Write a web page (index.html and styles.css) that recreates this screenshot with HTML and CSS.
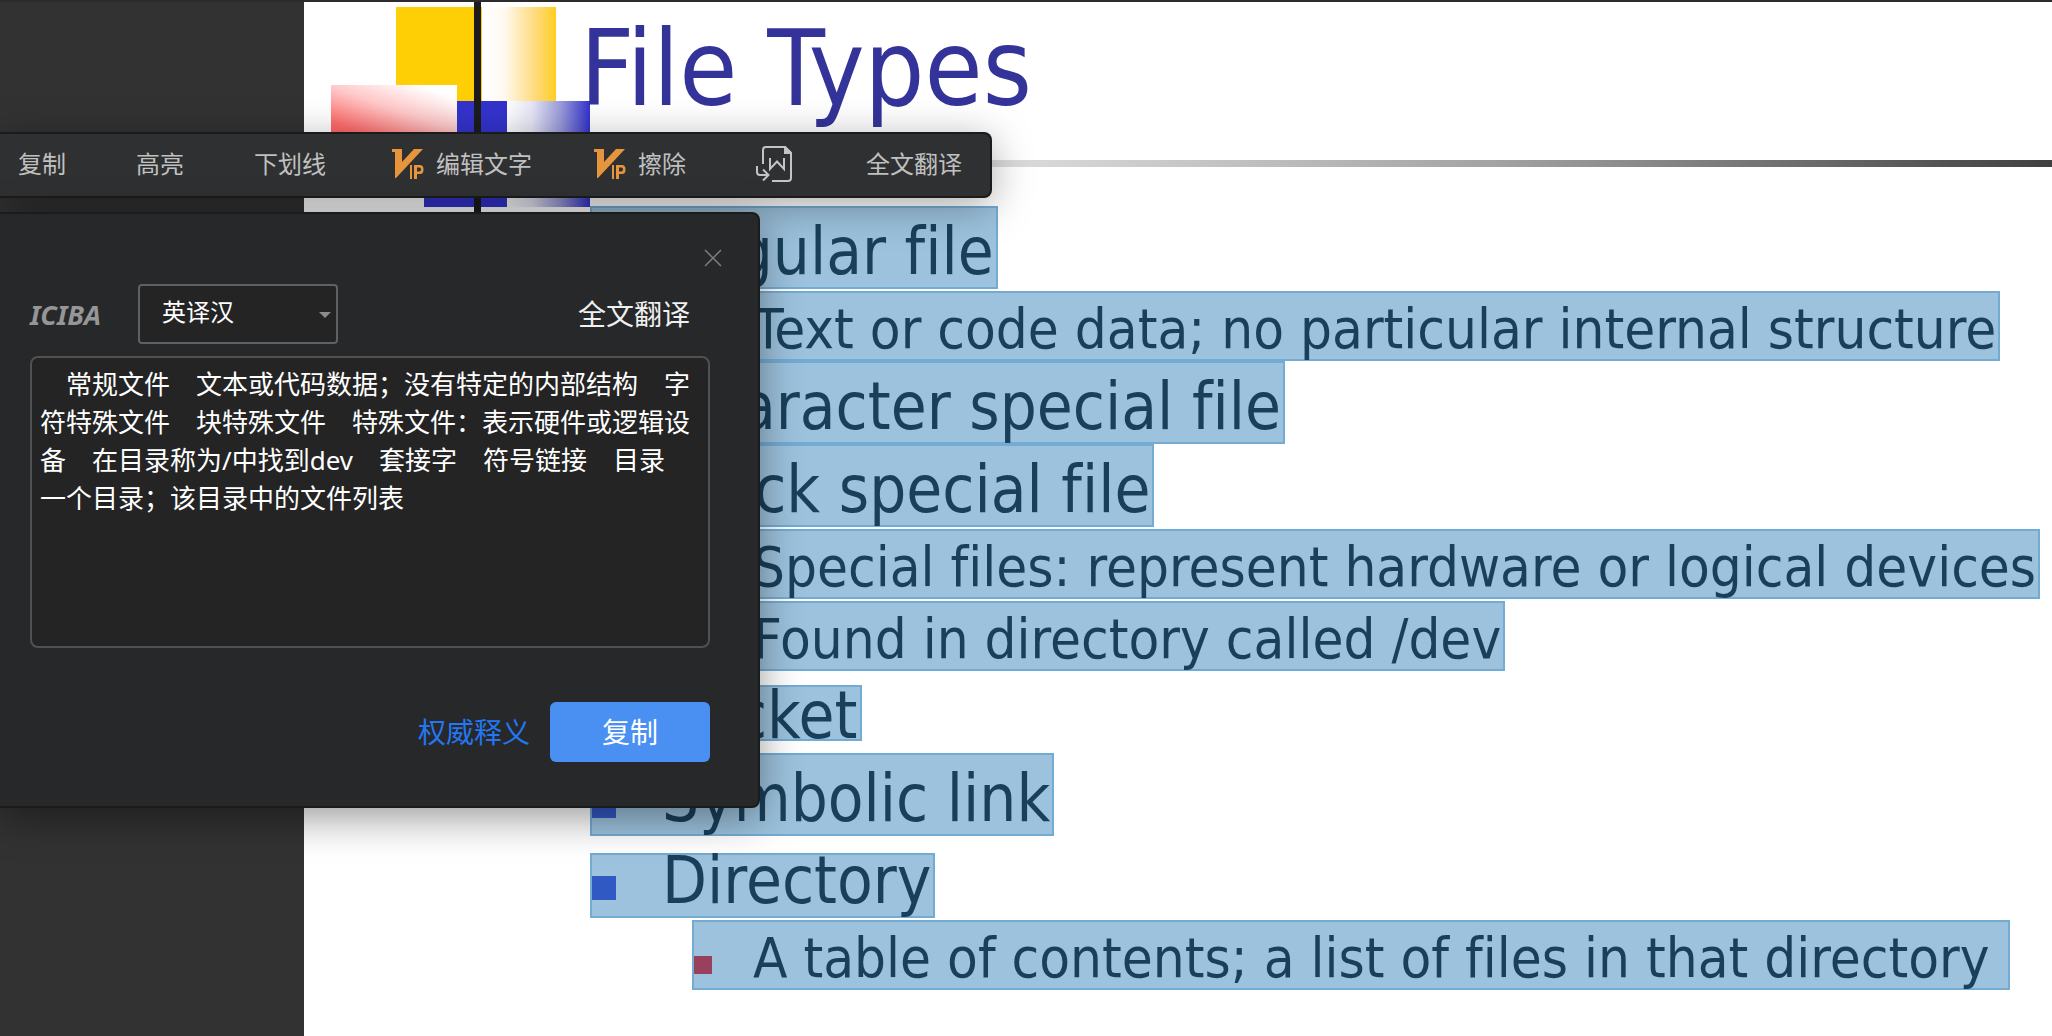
FILE: index.html
```html
<!DOCTYPE html>
<html lang="zh-CN">
<head>
<meta charset="utf-8">
<title>File Types</title>
<link rel="stylesheet" href="styles.css">
</head>
<body>
<svg class="symbols" aria-hidden="true">
  <symbol id="vip" viewBox="0 0 32 32">
    <path fill="#e6953c" fill-rule="evenodd" d="M0 1H10V14L22 1H31L4 30H3V4H0ZM18 17H20V31H18ZM22 17H28Q31.500 17 31.500 21.500T28 26H25V31H22ZM25 19.500V23.500H27.500Q29 23.500 29 21.500T27.500 19.500Z"/>
  </symbol>
</svg>

<main class="slide">
  <svg class="motif" viewBox="0 0 286 211" aria-hidden="true">
    <defs>
      <linearGradient id="gold"><stop offset="0.050" stop-color="#fff"/><stop offset="0.300" stop-color="#fffaf0"/><stop offset="0.750" stop-color="#ffd974"/><stop offset="1" stop-color="#ffce1f"/></linearGradient>
      <linearGradient id="indigo"><stop offset="0" stop-color="#fff"/><stop offset="0.300" stop-color="#e6e6f6"/><stop offset="0.650" stop-color="#9a9adb"/><stop offset="1" stop-color="#3333cc"/></linearGradient>
      <linearGradient id="rose" x1="0" y1="1" x2="0.700" y2="0"><stop offset="0" stop-color="#ff4c4c"/><stop offset="0.300" stop-color="#ff7070"/><stop offset="0.650" stop-color="#ffc8c8"/><stop offset="1" stop-color="#fff"/></linearGradient>
    </defs>
    <rect x="92" y="5" width="86" height="120" fill="#ffcf05"/>
    <rect x="178" y="5" width="74" height="94" fill="url(#gold)"/>
    <rect x="120" y="99" width="83" height="106" fill="#3333cc"/>
    <rect x="203" y="99" width="83" height="106" fill="url(#indigo)"/>
    <rect x="27" y="83" width="126" height="64" fill="url(#rose)"/>
    <rect x="170" y="0" width="7" height="211" fill="#1c1c1c"/>
  </svg>

  <h1 class="slide-title">File Types</h1>
  <hr class="slide-rule">

  <ul class="outline">
    <li class="row">Regular file</li>
    <li class="row sub">Text or code data; no particular internal structure</li>
    <li class="row">Character special file</li>
    <li class="row">Block special file</li>
    <li class="row sub">Special files: represent hardware or logical devices</li>
    <li class="row sub">Found in directory called /dev</li>
    <li class="row short">Socket</li>
    <li class="row late">Symbolic link</li>
    <li class="row mid">Directory</li>
    <li class="row sub">A table of contents; a list of files in that directory&nbsp;</li>
  </ul>
</main>

<div class="toolbar" role="toolbar">
  <button class="tool">复制</button>
  <button class="tool">高亮</button>
  <button class="tool">下划线</button>
  <button class="tool vip"><svg width="32" height="32" aria-hidden="true"><use href="#vip"/></svg>编辑文字</button>
  <button class="tool vip"><svg width="32" height="32" aria-hidden="true"><use href="#vip"/></svg>擦除</button>
  <button class="tool export" aria-label="Word">
    <svg width="36" height="36" viewBox="0 0 36 36" fill="none" stroke="#c4c4c4" stroke-width="2" aria-hidden="true">
      <path d="M7 18V4Q7 1 10 1H29L35 7V32Q35 35 32 35H16"/>
      <path d="M29 1V7H35Z" fill="#c4c4c4"/>
      <path d="M14 12V23L21 15.500L28 23V12"/>
      <path d="M1 20V26Q1 29 4 29H12M7 23.500L12.500 29L7 34.500"/>
    </svg>
  </button>
  <button class="tool">全文翻译</button>
</div>

<section class="panel">
  <button class="close" aria-label="关闭">
    <svg width="18" height="18" viewBox="0 0 18 18" stroke="#7c7c7c" stroke-width="1.500" aria-hidden="true"><path d="M1 1L17 17M17 1L1 17"/></svg>
  </button>
  <div class="controls">
    <strong class="brand">ICIBA</strong>
    <div class="picker">
      <select class="direction" aria-label="翻译方向"><option>英译汉</option></select>
      <svg class="caret" width="12" height="6" viewBox="0 0 12 6" aria-hidden="true"><path fill="#8c8c8c" d="M0 0H12L6 6Z"/></svg>
    </div>
    <button class="full">全文翻译</button>
  </div>
  <textarea class="result" aria-label="译文" readonly>　常规文件　文本或代码数据；没有特定的内部结构　字
符特殊文件　块特殊文件　特殊文件：表示硬件或逻辑设
备　在目录称为/中找到dev　套接字　符号链接　目录
一个目录；该目录中的文件列表</textarea>
  <div class="actions">
    <a class="lookup" href="#">权威释义</a>
    <button class="copy">复制</button>
  </div>
</section>
</body>
</html>
```

FILE: styles.css
```css
* { box-sizing: border-box; }

body {
  position: relative;
  display: flex;
  min-height: 100vh;
  margin: 0;
  overflow: hidden;
  padding-left: 304px;
  border-top: 2px solid #2d2b2c;
  background: #323232;
  font-family: "Noto Sans", "Noto Sans CJK SC", sans-serif;
}

button, select, textarea {
  margin: 0;
  padding: 0;
  border: 0;
  background: none;
  color: inherit;
  font: inherit;
}

svg { display: block; }
.symbols { position: absolute; width: 0; height: 0; }

/* Slide */
.slide {
  position: relative;
  flex: 1;
  min-width: 0;
  background: #fff;
  font-family: "DejaVu Sans Condensed", "DejaVu Sans", sans-serif;
  font-stretch: condensed;
  font-variant-ligatures: none;
  white-space: nowrap;
}

.motif {
  position: absolute;
  top: 0;
  left: 0;
  width: 286px;
  height: 211px;
}

.slide-title {
  position: relative;
  margin: 0;
  padding: 7px 0 0 276px;
  color: #333399;
  font-size: 105px;
  font-weight: 400;
  line-height: 120px;
}

.slide-rule {
  height: 7px;
  margin: 31px 0 39px;
  border: 0;
  background: linear-gradient(90deg, #fff, #dcdcdc 40%, #a3a3a3 68%, #404040);
}

.outline {
  display: flex;
  flex-direction: column;
  align-items: flex-start;
  margin: 0;
  padding: 0 0 0 286px;
  list-style: none;
}

.row {
  position: relative;
  height: 83px;
  padding: 0 2px 0 70px;
  border: 2px solid #74abd2;
  background: #9cc2dd;
  color: #193f5a;
  font-size: 65px;
  line-height: 88px;
}

.row::before {
  content: "";
  position: absolute;
  top: 39px;
  left: 0;
  width: 24px;
  height: 24px;
  background: #3159c4;
}

.sub {
  height: 70px;
  margin: 2px 0 0 102px;
  padding-left: 59px;
  font-size: 56px;
  line-height: 72px;
}

.sub::before {
  top: 34px;
  width: 18px;
  height: 18px;
  background: #99405c;
}

.short { height: 56px; margin-top: 14px; line-height: 57px; }
.late { margin-top: 12px; }
.mid { height: 65px; margin-top: 17px; line-height: 51px; }
.mid::before { top: 21px; }

/* Selection toolbar */
.toolbar {
  position: absolute;
  top: 130px;
  left: 0;
  display: flex;
  align-items: center;
  gap: 62px;
  height: 66px;
  padding: 0 24px 2px 14px;
  border: 2px solid #1b1b1c;
  border-left: 0;
  border-radius: 0 8px 8px 0;
  background: #2f3031;
  box-shadow: 0 8px 40px rgba(0, 0, 0, 0.340);
  color: #c0c0c0;
  font-size: 24px;
  line-height: 32px;
  white-space: nowrap;
}

.tool { padding: 0 4px; }
.vip { display: flex; align-items: center; gap: 12px; padding: 0; }
.export { padding: 0 8px; }

/* Translation panel */
.panel {
  position: absolute;
  top: 210px;
  left: 0;
  width: 760px;
  padding: 35px 48px 44px 30px;
  border: 2px solid #1b1b1c;
  border-left: 0;
  border-radius: 0 8px 8px 0;
  background: #27282a;
  box-shadow: 0 10px 40px rgba(0, 0, 0, 0.400);
  color: #fff;
}

.close { display: block; margin: 0 -12px 0 auto; }

.controls {
  display: flex;
  align-items: center;
  margin: 17px 0 12px;
}

.brand {
  width: 108px;
  color: #969696;
  font-size: 27px;
  font-style: italic;
}

.picker { position: relative; width: 200px; }

.direction {
  display: block;
  width: 100%;
  height: 60px;
  padding: 0 22px 6px;
  border: 2px solid #606060;
  border-radius: 4px;
  appearance: none;
  background: #242424;
  font-size: 24px;
}

.caret { position: absolute; top: 28px; right: 7px; }

.full {
  margin: 0 20px 0 auto;
  padding-bottom: 2px;
  color: #f0f0f0;
  font-size: 28px;
}

.result {
  display: block;
  width: 100%;
  height: 292px;
  padding: 7px 8px;
  border: 2px solid #515151;
  border-radius: 8px;
  background: #242424;
  font-size: 26px;
  line-height: 38px;
  overflow: hidden;
  resize: none;
  white-space: pre;
}

.actions {
  display: flex;
  align-items: center;
  justify-content: flex-end;
  gap: 20px;
  margin-top: 54px;
  font-size: 28px;
}

.lookup { padding-bottom: 2px; color: #2377f3; text-decoration: none; }

.copy {
  width: 160px;
  height: 60px;
  padding-bottom: 2px;
  border-radius: 6px;
  background: #4a8ff2;
}
```
